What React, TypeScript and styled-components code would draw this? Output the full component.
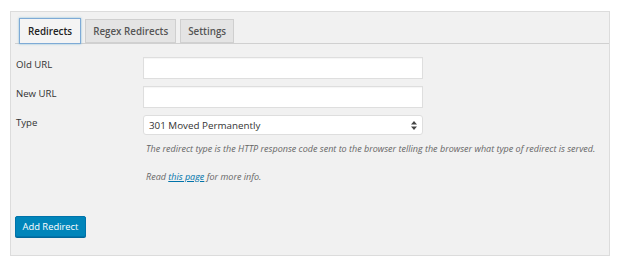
import React from "react";
import styled, { createGlobalStyle } from "styled-components";

const Global = createGlobalStyle`
  html, body { margin: 0; padding: 0; background: #fff; }
  body { font-family: "Open Sans", "Liberation Sans", sans-serif; color: #444; }
`;

const Page = styled.div`
  padding: 11px 15px 0 10px;
`;

const Panel = styled.div`
  width: 600px;
  height: 245px;
  box-sizing: border-box;
  border: 1px solid #dcdcdc;
  background: #f1f1f1;
  padding: 6px 0 0 4px;
`;

const TabBar = styled.div`
  display: flex;
  align-items: flex-end;
  gap: 4px;
  padding-left: 4px;
  border-bottom: 1px solid #d0d0d0;
  height: 25px;
`;

const Tab = styled.div<{ $active?: boolean }>`
  box-sizing: border-box;
  height: ${(p) => (p.$active ? "26px" : "24px")};
  margin-bottom: ${(p) => (p.$active ? "-1px" : "0")};
  padding: 0 ${(p) => (p.$active ? "8px" : "7px")};
  display: flex;
  align-items: center;
  font-size: 9.8px;
  font-weight: 600;
  color: ${(p) => (p.$active ? "#222" : "#555")};
  background: ${(p) => (p.$active ? "#f4f4f4" : "#e4e4e4")};
  border: 1px solid ${(p) => (p.$active ? "#7eaad6" : "#cfcfcf")};
  border-bottom-color: ${(p) => (p.$active ? "#7eaad6" : "#d0d0d0")};
  box-shadow: ${(p) => (p.$active ? "0 0 2px rgba(30,140,190,.5)" : "none")};
`;

const Form = styled.div`
  display: grid;
  grid-template-columns: 127px 280px;
  row-gap: 7px;
  margin-top: 13px;
  padding-left: 1px;
`;

const Label = styled.div<{ $offset?: number }>`
  font-size: 9.6px;
  line-height: 12px;
  padding-top: ${(p) => p.$offset ?? 2}px;
  color: #333;
`;

const TextInput = styled.div`
  box-sizing: border-box;
  height: 22px;
  background: #fff;
  border: 1px solid #dedede;
  box-shadow: inset 0 1px 1px rgba(0,0,0,.04);
`;

const Select = styled.div`
  box-sizing: border-box;
  height: 20px;
  background: #fff;
  border: 1px solid #dedede;
  border-radius: 3px;
  display: flex;
  align-items: center;
  justify-content: space-between;
  padding: 0 5px 0 5px;
  font-size: 9.8px;
  color: #333;
`;

const HelpBlock = styled.div`
  margin: 8px 0 0 131px;
  display: flex;
  flex-direction: column;
  gap: 16px;
`;

const Help = styled.div`
  font-size: 9px;
  font-style: italic;
  color: #666;
  line-height: 12px;
  white-space: nowrap;
`;

const Link = styled.a`
  color: #0073aa;
  text-decoration: underline;
`;

const Button = styled.button`
  display: block;
  margin-top: 33px;
  height: 21px;
  width: 71px;
  box-sizing: border-box;
  background: #0085ba;
  border: 1px solid #0073aa;
  border-radius: 2px;
  color: #fff;
  font-family: "Open Sans", sans-serif;
  font-size: 9.4px;
  padding: 0;
  box-shadow: 0 1px 0 #006799;
`;

const Arrows = () => (
  <svg width="6" height="9" viewBox="0 0 6 9">
    <path d="M3 0 L6 3.5 H0 Z M3 9 L6 5.5 H0 Z" fill="#444" />
  </svg>
);

export default function App() {
  return (
    <>
      <Global />
      <Page>
        <Panel>
          <TabBar>
            <Tab $active>Redirects</Tab>
            <Tab>Regex Redirects</Tab>
            <Tab>Settings</Tab>
          </TabBar>
          <Form>
            <Label>Old URL</Label>
            <TextInput />
            <Label>New URL</Label>
            <TextInput />
            <Label $offset={2}>Type</Label>
            <Select>
              <span>301 Moved Permanently</span>
              <Arrows />
            </Select>
          </Form>
          <HelpBlock>
            <Help>
              The redirect type is the HTTP response code sent to the browser telling the browser what type of redirect is served.
            </Help>
            <Help>
              Read <Link href="#">this page</Link> for more info.
            </Help>
          </HelpBlock>
          <Button>Add Redirect</Button>
        </Panel>
      </Page>
    </>
  );
}
